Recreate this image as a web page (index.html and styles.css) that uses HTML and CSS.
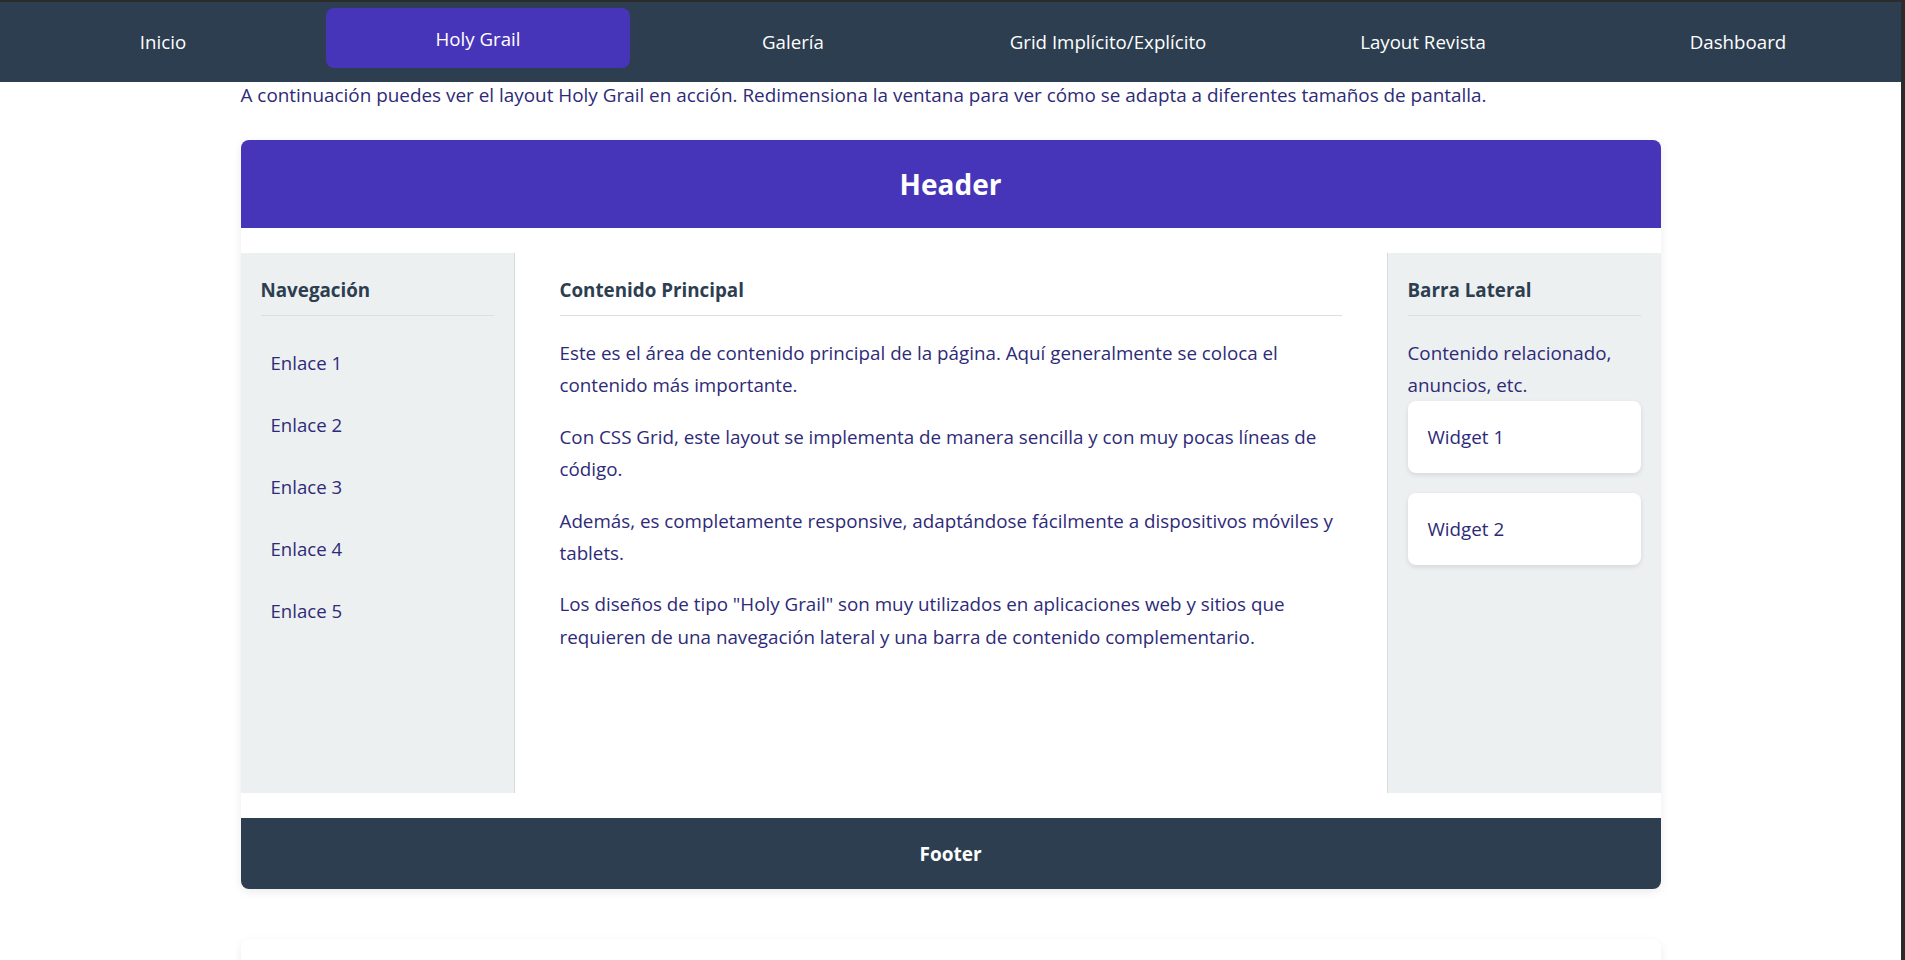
FILE: index.html
```html
<!DOCTYPE html>
<html lang="es">
<head>
<meta charset="utf-8">
<title>Holy Grail Layout</title>
<link rel="stylesheet" href="styles.css">
</head>
<body>
<nav class="topnav">
  <a class="tab" href="#">Inicio</a>
  <a class="tab active" href="#">Holy Grail</a>
  <a class="tab" href="#">Galería</a>
  <a class="tab" href="#">Grid Implícito/Explícito</a>
  <a class="tab" href="#">Layout Revista</a>
  <a class="tab" href="#">Dashboard</a>
</nav>
<main class="page">
  <p class="intro">A continuación puedes ver el layout Holy Grail en acción. Redimensiona la ventana para ver cómo se adapta a diferentes tamaños de pantalla.</p>
  <section class="holy">
    <header class="hg-header">Header</header>
    <div class="hg-middle">
      <aside class="hg-nav">
        <h3 class="col-title">Navegación</h3>
        <ul class="links">
          <li><a href="#">Enlace 1</a></li>
          <li><a href="#">Enlace 2</a></li>
          <li><a href="#">Enlace 3</a></li>
          <li><a href="#">Enlace 4</a></li>
          <li><a href="#">Enlace 5</a></li>
        </ul>
      </aside>
      <article class="hg-main">
        <h3 class="col-title">Contenido Principal</h3>
        <p>Este es el área de contenido principal de la página. Aquí generalmente se coloca el contenido más importante.</p>
        <p>Con CSS Grid, este layout se implementa de manera sencilla y con muy pocas líneas de código.</p>
        <p>Además, es completamente responsive, adaptándose fácilmente a dispositivos móviles y tablets.</p>
        <p>Los diseños de tipo "Holy Grail" son muy utilizados en aplicaciones web y sitios que requieren de una navegación lateral y una barra de contenido complementario.</p>
      </article>
      <aside class="hg-side">
        <h3 class="col-title">Barra Lateral</h3>
        <p class="side-text">Contenido relacionado, anuncios, etc.</p>
        <div class="widget">Widget 1</div>
        <div class="widget">Widget 2</div>
      </aside>
    </div>
    <footer class="hg-footer">Footer</footer>
  </section>
  <section class="next-card"></section>
</main>
</body>
</html>
```

FILE: styles.css
```css
html {
  background: #2b2b2b;
}
body {
  margin: 2px 4px 0 0;
  min-height: calc(100vh - 2px);
  background: #ffffff;
  font-family: "Open Sans", "Noto Sans", sans-serif;
  color: #2e2a78;
  overflow: hidden;
}
.topnav {
  display: flex;
  gap: 11px;
  padding: 9px 11px 11px;
  background: #2c3e50;
  height: 60px;
}
.tab {
  flex: 1;
  display: flex;
  align-items: center;
  justify-content: center;
  color: #ffffff;
  text-decoration: none;
  font-size: 18.7px;
  border-radius: 8px;
}
.tab.active {
  background: #4735b9;
  transform: translateY(-3px);
}
.page {
  width: 1420px;
  margin: 0 auto;
}
.intro {
  margin: 0;
  font-size: 18.9px;
  line-height: 26px;
}
.holy {
  margin-top: 32px;
  background: #ffffff;
  border-radius: 8px;
  box-shadow: 0 3px 10px rgba(0, 0, 0, 0.08);
  display: flex;
  flex-direction: column;
  gap: 25px;
}
.hg-header {
  background: #4735b9;
  color: #ffffff;
  font-weight: 700;
  font-size: 28px;
  line-height: 40px;
  padding: 24px;
  text-align: center;
  border-radius: 8px 8px 0 0;
}
.hg-middle {
  display: grid;
  grid-template-columns: 274px 1fr 274px;
  height: 540px;
}
.hg-nav {
  background: #ecf0f1;
  border-right: 1px solid #d6dbdd;
  padding: 20px;
}
.hg-side {
  background: #ecf0f1;
  border-left: 1px solid #d6dbdd;
  padding: 20px;
}
.hg-main {
  padding: 20px 45px;
}
.col-title {
  margin: 0;
  font-size: 18.8px;
  font-weight: 700;
  color: #2c3e50;
  line-height: 34px;
  padding-bottom: 8px;
  border-bottom: 1px solid #dcdfe2;
}
.links {
  list-style: none;
  margin: 21px 0 0;
  padding: 0;
}
.links li {
  margin-bottom: 10px;
}
.links a {
  display: block;
  padding: 13px 10px;
  line-height: 26px;
  font-size: 18.6px;
  color: #2e2a78;
  text-decoration: none;
}
.hg-main p {
  margin: 21px 0 19px;
  font-size: 18.8px;
  line-height: 32.4px;
}
.hg-main p + p {
  margin-top: 0;
}
.side-text {
  margin: 21px 0 0;
  font-size: 18.8px;
  line-height: 32px;
}
.widget {
  background: #ffffff;
  border-radius: 8px;
  box-shadow: 0 2px 5px rgba(0, 0, 0, 0.1);
  padding: 20px;
  line-height: 32px;
  font-size: 18.8px;
  margin-bottom: 20px;
}
.hg-footer {
  background: #2c3e50;
  color: #ffffff;
  font-weight: 700;
  font-size: 19px;
  line-height: 23px;
  padding: 25px 24px 23px;
  text-align: center;
  border-radius: 0 0 8px 8px;
}
.next-card {
  margin-top: 50px;
  height: 200px;
  background: #ffffff;
  border-radius: 8px;
  box-shadow: 0 3px 10px rgba(0, 0, 0, 0.08);
}
```
